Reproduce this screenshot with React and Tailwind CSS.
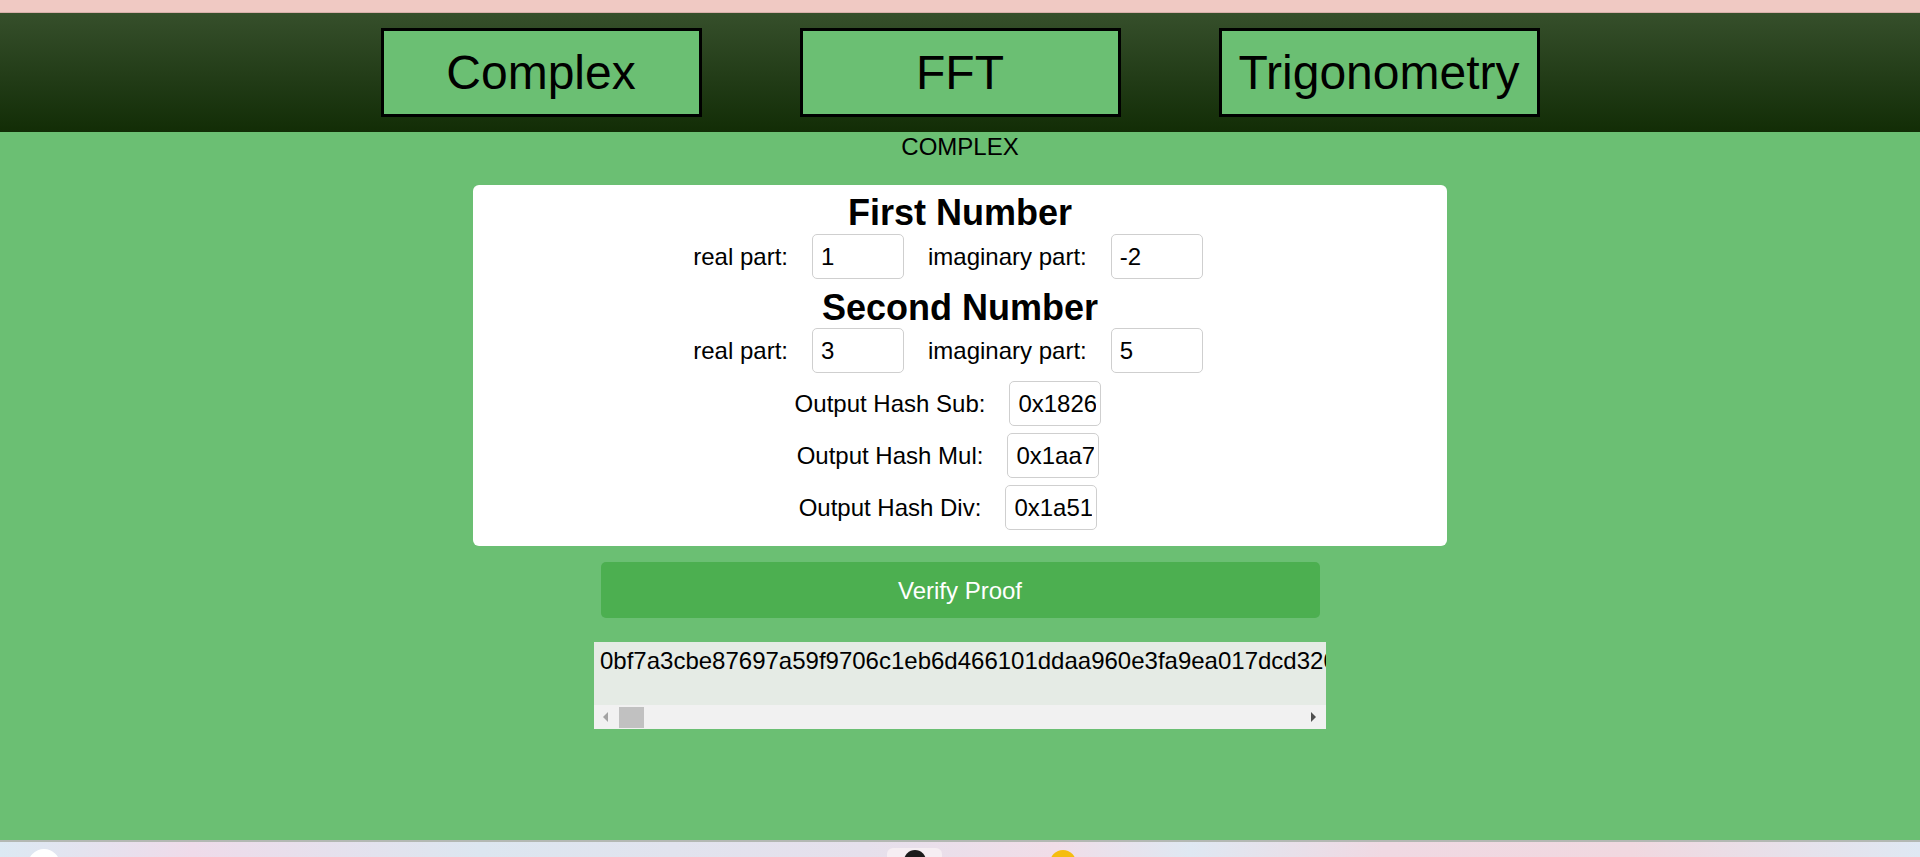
import React from "react";

const HASH =
  "0bf7a3cbe87697a59f9706c1eb6d466101ddaa960e3fa9ea017dcd3201c4e8a7f35b92d06ae1c4f8d2b7a09e63f15c8d4a2e7b90f1d36c58ae04b7d29f61c3e85";

function Field({ value, className = "" }) {
  return (
    <input
      readOnly
      value={value}
      className={`h-[45px] w-[92px] rounded-[5px] border border-[#cfcfcf] bg-white pl-[8px] pr-[4px] text-[24px] text-black outline-none ${className}`}
    />
  );
}

function NumberRow({ re, im }) {
  return (
    <div className="flex items-center justify-center gap-[24px] pr-[24px] text-[24px]">
      <span>real part:</span>
      <Field value={re} />
      <span>imaginary part:</span>
      <Field value={im} />
    </div>
  );
}

function HashRow({ label, value, className = "" }) {
  return (
    <div className={`flex items-center justify-center gap-[24px] pr-[24px] text-[24px] ${className}`}>
      <span>{label}</span>
      <Field value={value} />
    </div>
  );
}

export default function App() {
  const tabs = ["Complex", "FFT", "Trigonometry"];

  return (
    <div className="flex h-[857px] flex-col overflow-hidden font-['Liberation_Sans',Arial,sans-serif] text-black">
      {/* browser strip */}
      <div className="h-[13px] shrink-0 border-b border-[#d7b0aa] bg-[#f0c9c3]" />

      {/* nav */}
      <header className="flex h-[119px] shrink-0 items-center justify-center gap-[98px] bg-gradient-to-b from-[#364f2b] to-[#122d06]">
        {tabs.map((t) => (
          <button
            key={t}
            className="flex h-[89px] w-[321px] items-center justify-center border-[3px] border-black bg-[#6bbf73] text-[48px] leading-none"
          >
            {t}
          </button>
        ))}
      </header>

      <main className="flex flex-1 flex-col items-center bg-[#6bbf73]">
        <div className="mt-[1px] text-[24px] leading-[28px]">COMPLEX</div>

        <div className="mt-[24px] w-[974px] rounded-[6px] bg-white pb-[16px] pt-[4px]">
          <h2 className="h-[44px] pt-[3px] text-center text-[36px] font-bold leading-[41px]">First Number</h2>
          <div className="mt-[1px]">
            <NumberRow re="1" im="-2" />
          </div>
          <h2 className="mt-[5px] h-[44px] pt-[3px] text-center text-[36px] font-bold leading-[41px]">
            Second Number
          </h2>
          <NumberRow re="3" im="5" />
          <HashRow
            className="mt-[8px]"
            label="Output Hash Sub:"
            value="0x1826c4f0a9d3b7e215f8c06a4d92e7b1"
          />
          <HashRow
            className="mt-[7px]"
            label="Output Hash Mul:"
            value="0x1aa73e9b05c2f4d816a0e7b3c95d2f14"
          />
          <HashRow
            className="mt-[7px]"
            label="Output Hash Div:"
            value="0x1a51d8e27b4c09f3a6e15d7c2b80f946"
          />
        </div>

        <button className="mt-[16px] h-[56px] w-[719px] rounded-[5px] bg-[#4caf50] pt-[1px] text-[24px] text-white">
          Verify Proof
        </button>

        <div className="mt-[24px] w-[732px] bg-[#e5ebe5]">
          <div className="h-[63px] overflow-hidden whitespace-nowrap px-[6px] pt-[5px] text-[24px] leading-[28px]">
            {HASH}
          </div>
          {/* horizontal scrollbar */}
          <div className="flex h-[24px] items-center bg-[#f1f1f1]">
            <div className="ml-[9px] h-0 w-0 border-y-[5px] border-r-[5px] border-y-transparent border-r-[#a3a3a3]" />
            <div className="ml-[11px] h-[21px] w-[25px] bg-[#c1c1c1]" />
            <div className="flex-1" />
            <div className="mr-[10px] h-0 w-0 border-y-[5px] border-l-[5px] border-y-transparent border-l-[#505050]" />
          </div>
        </div>

        <div className="flex-1" />
      </main>

      {/* taskbar */}
      <div className="h-[2px] shrink-0 bg-[#b3b8b3]" />
      <div className="flex h-[15px] shrink-0 items-start overflow-hidden bg-[linear-gradient(90deg,#dce9f3_0%,#efdbea_10%,#dce6f0_25%,#e6e0ec_45%,#f1dde8_55%,#dfe8f2_62%,#f0d9e3_72%,#f1d8e0_85%,#dfe8f3_100%)]">
        <div className="ml-[28px] mt-[7px] h-[32px] w-[32px] rounded-full bg-white" />
        <div className="ml-[827px] mt-[6px] flex h-[40px] w-[55px] justify-center rounded-[6px] bg-[#f6eef3] pt-[2px]">
          <div className="h-[24px] w-[22px] rounded-full bg-[#1b1b1b]" />
        </div>
        <div className="ml-[108px] mt-[8px] h-[26px] w-[26px] rounded-full bg-[#f5bd0f]" />
      </div>
    </div>
  );
}
